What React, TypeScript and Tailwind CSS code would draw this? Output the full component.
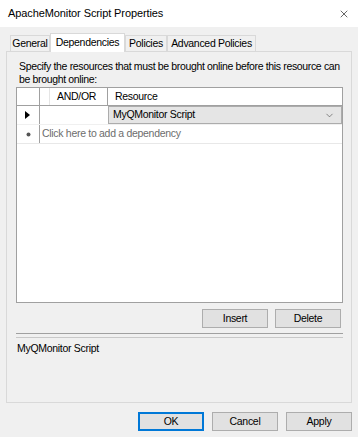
import { ChevronDown, X } from "lucide-react";

const Btn = ({ label, focus }: { label: string; focus?: boolean }) => (
  <button
    className={
      "w-[66px] h-[19px] flex items-center justify-center bg-[#e1e1e1] text-black " +
      (focus ? "border-2 border-[#0078d7]" : "border border-[#adadad]")
    }
  >
    {label}
  </button>
);

const Tab = ({ label, w, active }: { label: string; w: string; active?: boolean }) => (
  <div
    className={
      "flex items-center justify-center whitespace-nowrap border border-b-0 border-[#d9d9d9] " +
      w +
      (active ? " h-[19px] bg-white -mb-px z-10 relative" : " h-[16px] bg-[#f0f0f0]")
    }
  >
    {label}
  </div>
);

export default function App() {
  return (
    <div className="w-[358px] h-[437px] bg-[#f0f0f0] text-[10.5px] tracking-[-0.3px] text-black font-['Liberation_Sans',Arial,sans-serif] overflow-hidden">
      {/* title bar */}
      <div className="h-[27px] bg-white flex items-center justify-between pl-[8px] pr-[8px]">
        <span className="text-[11px] tracking-[-0.1px]">ApacheMonitor Script Properties</span>
        <X className="w-[12px] h-[12px]" strokeWidth={1.2} />
      </div>

      {/* tabs */}
      <div className="flex items-end pl-[10px] mt-[6px] h-[18px]">
        <Tab label="General" w="w-[40px]" />
        <Tab label="Dependencies" w="w-[75px]" active />
        <Tab label="Policies" w="w-[42px]" />
        <Tab label="Advanced Policies" w="w-[89px]" />
      </div>

      {/* tab page */}
      <div className="ml-[6px] w-[346px] h-[352px] border border-[#d9d9d9] bg-[#f0f0f0] flex flex-col">
        <p className="pl-[12px] pt-[8px] leading-[13px] whitespace-nowrap tracking-[-0.35px]">
          Specify the resources that must be brought online before this resource can
          <br />
          be brought online:
        </p>

        {/* grid */}
        <div className="ml-[9px] mt-px w-[327px] h-[216px] bg-white border border-[#a0a0a0] flex flex-col">
          <div className="flex h-[18px] border-b border-[#a0a0a0]">
            <div className="w-[23px] border-r border-[#a0a0a0]" />
            <div className="w-[10px] border-r border-[#e5e5e5]" />
            <div className="w-[58px] border-r border-[#a0a0a0] flex items-center pl-[7px]">AND/OR</div>
            <div className="flex-1 flex items-center pl-[7px]">Resource</div>
          </div>
          <div className="flex h-[19px] border-b border-[#f0f0f0]">
            <div className="w-[23px] border-r border-[#a0a0a0] flex items-center pl-[8px]">
              <svg width="5" height="8" viewBox="0 0 5 8">
                <path d="M0 0L5 4L0 8Z" fill="#000" />
              </svg>
            </div>
            <div className="w-[68px]" />
            <div className="flex-1 flex items-center justify-between bg-[#e5e5e5] border border-[#acacac] pl-[4px] pr-[6px]">
              <span>MyQMonitor Script</span>
              <ChevronDown className="w-[11px] h-[11px] text-[#444]" strokeWidth={1.3} />
            </div>
          </div>
          <div className="flex h-[19px] border-b border-[#e8e8e8]">
            <div className="w-[23px] border-r border-[#a0a0a0] flex items-center justify-center">
              <svg width="5" height="5" viewBox="0 0 5 5">
                <circle cx="2.5" cy="2.5" r="2" fill="#555" />
              </svg>
            </div>
            <div className="flex-1 flex items-center pl-[2px] text-[#6d6d6d]">Click here to add a dependency</div>
          </div>
        </div>

        {/* grid buttons */}
        <div className="flex justify-end gap-[7px] mt-[6px] w-[334px]">
          <Btn label="Insert" />
          <Btn label="Delete" />
        </div>

        {/* description */}
        <div className="ml-[9px] mt-[5px] w-[327px] h-[5px] border-t border-b border-[#a0a0a0] border-b-[#c8c8c8]" />
        <div className="ml-[10px] mt-[3px]">MyQMonitor Script</div>
      </div>

      {/* dialog buttons */}
      <div className="flex justify-end gap-[8px] pr-[6px] mt-[9px]">
        <Btn label="OK" focus />
        <Btn label="Cancel" />
        <Btn label="Apply" />
      </div>
    </div>
  );
}
